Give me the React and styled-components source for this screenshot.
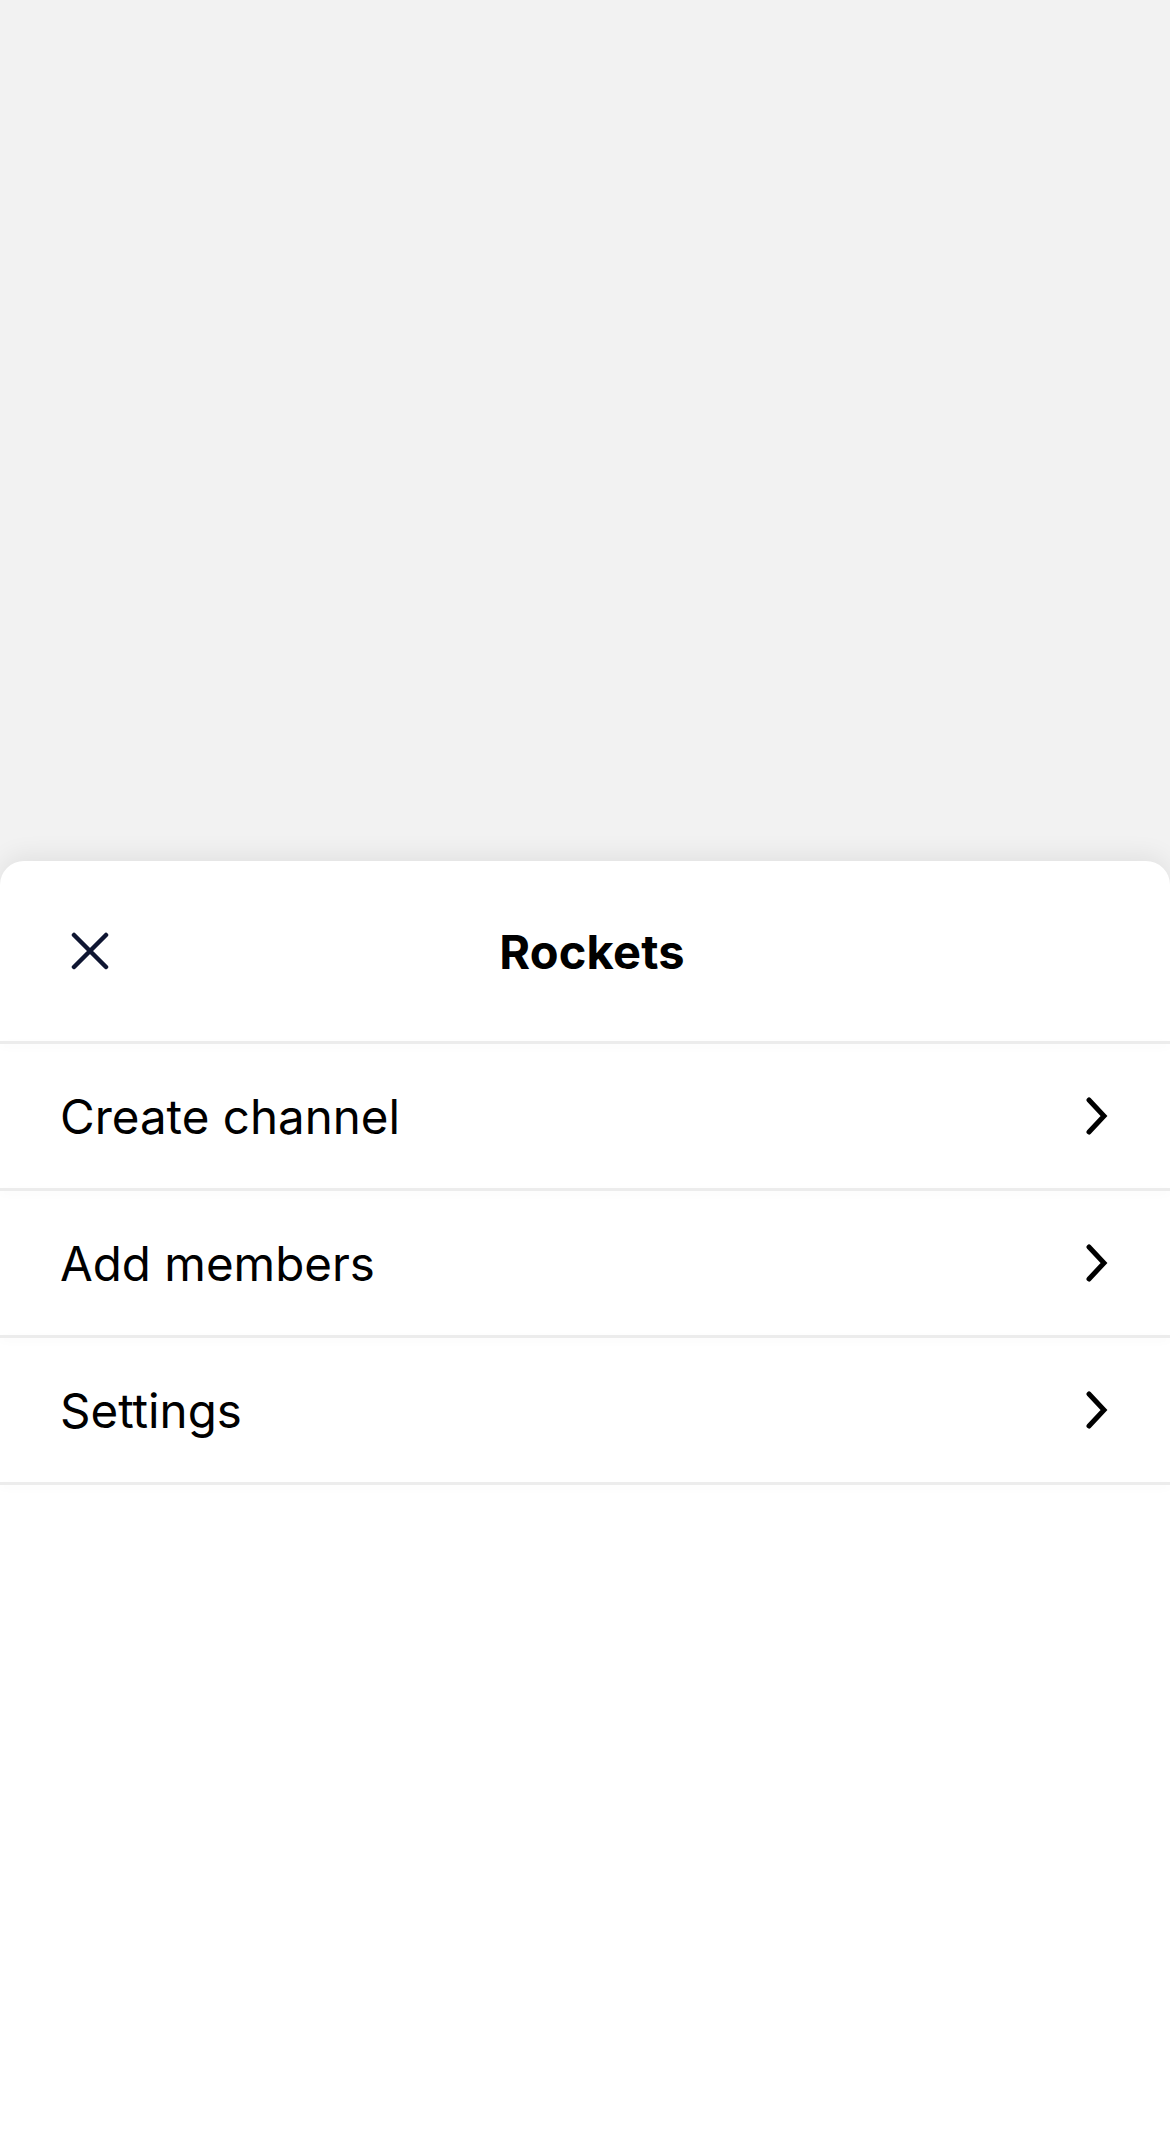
import React from "react";
import styled, { createGlobalStyle } from "styled-components";

//
// Global
//
const GlobalStyle = createGlobalStyle`
    html, body {
        margin: 0;
        padding: 0;
        background: #f2f2f2;
        font-family: Inter, "Noto Sans", "Liberation Sans", sans-serif;
    }
`;

//
// Component Styles
//
const Screen = styled.div`
    width: 1170px;
    height: 2154px;
    display: flex;
    flex-direction: column;
    background: #f2f2f2;
    overflow: hidden;
`;

const Backdrop = styled.div`
    height: 861px;
    flex-shrink: 0;
`;

const Sheet = styled.div`
    flex: 1;
    background: #ffffff;
    border-radius: 24px 24px 0 0;
    box-shadow: 0 -6px 24px rgba(0, 0, 0, 0.07);
    display: flex;
    flex-direction: column;
`;

const Header = styled.div`
    height: 180px;
    display: grid;
    grid-template-columns: 180px 1fr 180px;
    align-items: center;
`;

const CloseButton = styled.button`
    border: none;
    background: none;
    padding: 0;
    margin-left: 70px;
    width: 40px;
    height: 40px;
    display: flex;
    align-items: center;
    justify-content: center;
    cursor: pointer;
`;

const Title = styled.div`
    text-align: center;
    padding-left: 14px;
    font-size: 47px;
    font-weight: 650;
    color: #000;
    letter-spacing: 0.2px;
`;

const Divider = styled.div`
    height: 3px;
    background: #ececec;
    box-shadow: 0 3px 8px rgba(0, 0, 0, 0.035);
`;

const Row = styled.div`
    height: 144px;
    display: flex;
    align-items: center;
    justify-content: space-between;
    padding: 0 60px 0 60px;
    cursor: pointer;
`;

const Label = styled.span`
    font-size: 47.5px;
    font-weight: 400;
    color: #000;
    letter-spacing: 0;
`;

//
// Icons
//
const CloseIcon = () => (
    <svg width="38" height="38" viewBox="0 0 38 38" fill="none">
        <path d="M3 3 L35 35 M35 3 L3 35" stroke="#0f1632" strokeWidth="4.5" strokeLinecap="round" />
    </svg>
);

const Chevron = () => (
    <svg width="26" height="38" viewBox="0 0 26 38" fill="none">
        <path d="M5 3 L20 19 L5 35" stroke="#000" strokeWidth="5" strokeLinecap="round" strokeLinejoin="miter" />
    </svg>
);

const items = ["Create channel", "Add members", "Settings"];

const App = () => {
    return (
        <Screen>
            <GlobalStyle />
            <Backdrop />
            <Sheet>
                <Header>
                    <CloseButton aria-label="Close">
                        <CloseIcon />
                    </CloseButton>
                    <Title>Rockets</Title>
                    <div />
                </Header>
                <Divider />
                {items.map((item) => (
                    <React.Fragment key={item}>
                        <Row>
                            <Label>{item}</Label>
                            <Chevron />
                        </Row>
                        <Divider />
                    </React.Fragment>
                ))}
            </Sheet>
        </Screen>
    );
};

export default App;
